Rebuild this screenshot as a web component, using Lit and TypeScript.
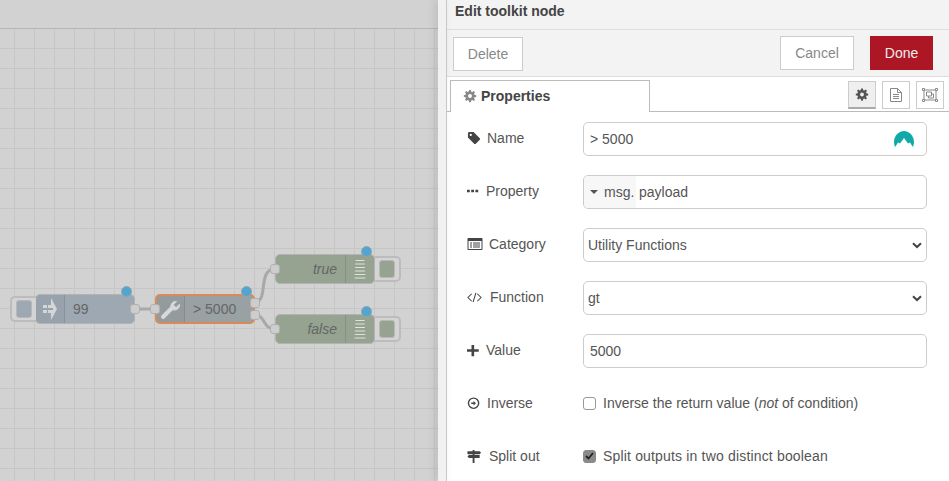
import { html, css, LitElement, svg } from "lit"
import { customElement } from "lit/decorators.js"

type FlowNode = {
  x: number
  y: number
  w: number
  label: string
  kind: "inject" | "tool" | "debug"
}

const NODES: FlowNode[] = [
  { x: 35, y: 294, w: 100, label: "99", kind: "inject" },
  { x: 155, y: 294, w: 100, label: "> 5000", kind: "tool" },
  { x: 275, y: 254, w: 100, label: "true", kind: "debug" },
  { x: 275, y: 314, w: 100, label: "false", kind: "debug" },
]

const arrowIcon = html`<svg width="14" height="24" viewBox="0 0 14 24" fill="#d4d6d8">
  <path d="M0 8h4v3H0zM0 13h4v3H0zM5 8h3V1l6 11-6 11v-7H5v-3h5v-2H5z" />
</svg>`
const wrenchIcon = html`<svg width="20" height="20" viewBox="0 0 20 20">
  <path d="M2.200 17.800 11 9" stroke="#d8d8d8" stroke-width="4.200" stroke-linecap="round" />
  <path d="M10 8.500c-.8-3.400 2-6.600 5.600-6l-3 3 .6 2.200 2.200.6 3-3c.6 3.600-2.600 6.400-6 5.600z" fill="#d8d8d8" stroke="#d8d8d8" />
</svg>`
const debugIcon = html`<svg width="12" height="20" viewBox="0 0 12 20" fill="#dfe3da">
  <path d="M1.500 1h9v1h-9zM1.300 4.500h9.400v1H1.300zM1.100 8h9.800v1H1.100zM.9 11.500h10.200v1H.9zM.7 15h10.600v1H.7zM.5 18.400h11v1H.5z" />
</svg>`

const icons = {
  gear: svg`<path d="M7 0h2l.4 2 1.200.5 1.700-1.100 1.400 1.400-1.100 1.700.5 1.200 2 .4v2l-2 .4-.5 1.200 1.100 1.700-1.400 1.400-1.700-1.100-1.200.5L9 14H7l-.4-2-1.200-.5-1.700 1.100-1.400-1.400 1.100-1.700L2.900 8.300.9 7.900V6l2-.4.500-1.200-1.100-1.700 1.400-1.400 1.700 1.100 1.200-.5zM8 4.800a2.200 2.200 0 1 0 0 4.400 2.200 2.200 0 0 0 0-4.400z" fill-rule="evenodd"/>`,
  tag: svg`<path d="M1 2.500C1 1.700 1.700 1 2.500 1H7l6.600 6.600c.5.500.5 1.300 0 1.800l-4.200 4.200c-.5.500-1.300.5-1.800 0L1 7zM4 3a1.200 1.200 0 1 0 0 2.400A1.200 1.200 0 0 0 4 3z" fill-rule="evenodd"/>`,
  dots: svg`<path d="M0 6.500h3.200v3H0zM4.800 6.500H8v3H4.800zM9.600 6.500h3.200v3H9.600z"/>`,
  list: svg`<path d="M1.500 2h13c.6 0 1 .4 1 1v10c0 .6-.4 1-1 1h-13c-.6 0-1-.4-1-1V3c0-.6.4-1 1-1zm0 3v8h13V5zM3 6.500h2v1H3zm3 0h7v1H6zM3 8.500h2v1H3zm3 0h7v1H6zM3 10.500h2v1H3zm3 0h7v1H6z" fill-rule="evenodd"/>`,
  code: svg`<path d="M5 4 1 8l4 4M11 4l4 4-4 4M9.500 3l-3 10" fill="none" stroke="currentColor" stroke-width="1.100"/>`,
  plus: svg`<path d="M.0 6.600h4.800V2h2.800v4.600h4.900v2.800H7.600V14H4.800V9.400H0z"/>`,
  circle: svg`<path d="M7 1.500a6.200 6.200 0 1 1 0 12.400A6.200 6.200 0 0 1 7 1.500zM7 3a4.700 4.700 0 1 0 0 9.400A4.700 4.700 0 0 0 7 3zM7 5.200l2.500 2.500L7 10.200V8.500H4.500V6.900H7z" fill-rule="evenodd"/>`,
  signs: svg`<path d="M6 1h2v1.500h5.500L15 4l-1.500 1.500H8v1h5.500V9.500H8V15H6V9.500H2L.5 8 2 6.500h4v-1H.5v-3H6z"/>`,
}

// labelAt is the label's distance from the icon column's left edge
const ROWS = [
  { icon: icons.tag, label: "Name", size: 15, labelAt: 20 },
  { icon: icons.dots, label: "Property", size: 14, labelAt: 19 },
  { icon: icons.list, label: "Category", size: 16, labelAt: 22 },
  { icon: icons.code, label: "Function", size: 15, labelAt: 23 },
  { icon: icons.plus, label: "Value", size: 15, labelAt: 19 },
  { icon: icons.circle, label: "Inverse", size: 15, labelAt: 20 },
  { icon: icons.signs, label: "Split out", size: 15, labelAt: 22 },
]

@customElement("app-root")
export class AppRoot extends LitElement {
  static styles = css`
    :host {
      display: flex;
      width: 949px;
      height: 481px;
      overflow: hidden;
      font-family: "Liberation Sans", Arial, sans-serif;
      font-size: 14px;
      color: #555;
    }
    .workspace {
      width: 438px;
      flex: none;
      display: flex;
      flex-direction: column;
      background: #d2d2d2;
    }
    .topbar {
      height: 28px;
      border-bottom: 1px solid #b5b5b5;
      background: #d2d2d2;
      flex: none;
    }
    .canvas {
      position: relative;
      flex: 1;
      background-color: #d2d2d2;
      background-image:
        linear-gradient(#c6c6c6 1px, transparent 1px),
        linear-gradient(90deg, #c6c6c6 1px, transparent 1px);
      background-size: 20px 20px;
      background-position: 14px 19px;
    }
    .wires {
      position: absolute;
      left: 0;
      top: 0;
    }
    .node {
      position: absolute;
      height: 30px;
      box-sizing: border-box;
      border: 1px solid #b3b3b3;
      border-radius: 5px;
      display: flex;
      align-items: center;
      color: #666;
    }
    .node.inject {
      background: #9da8b3;
    }
    .node.tool {
      background: #99a1a3;
      border: 2px solid #da8a58;
    }
    .node.debug {
      background: #95a390;
      flex-direction: row-reverse;
    }
    .node-icon {
      width: 29px;
      height: 100%;
      box-sizing: border-box;
      flex: none;
      display: flex;
      align-items: center;
      justify-content: center;
      background: rgba(0, 0, 0, 0.03);
      border-right: 1px solid rgba(0, 0, 0, 0.1);
      border-radius: 4px 0 0 4px;
    }
    .node.tool .node-icon {
      width: 28px;
    }
    .node.debug .node-icon {
      border-right: 0;
      border-left: 1px solid rgba(0, 0, 0, 0.1);
      border-radius: 0 4px 4px 0;
      background: none;
    }
    .node-label {
      flex: 1;
      padding-left: 8px;
      white-space: nowrap;
    }
    .node.debug .node-label {
      padding: 0 8px 0 0;
      text-align: right;
      font-style: italic;
    }
    .port {
      position: absolute;
      width: 10px;
      height: 10px;
      box-sizing: border-box;
      background: #cdcdcd;
      border: 1px solid #b0b0b0;
      border-radius: 3px;
    }
    .dot {
      position: absolute;
      width: 11px;
      height: 11px;
      top: -9px;
      right: 2px;
      box-sizing: border-box;
      border-radius: 50%;
      background: #52a5ce;
      border: 1px solid #8ba6b5;
    }
    .tool .dot {
      top: -10px;
      right: 1px;
    }
    .nub {
      position: absolute;
      width: 26px;
      height: 26px;
      top: 1px;
      box-sizing: border-box;
      border: 2px solid #bcbcbc;
      background: #d4d4d4;
      display: flex;
      align-items: center;
      justify-content: center;
    }
    .nub span {
      width: 16px;
      height: 18px;
      box-sizing: border-box;
      border-radius: 3px;
      border: 1px solid #b8b8b8;
    }
    .inject .nub {
      left: -26px;
      border-right: 0;
      border-radius: 5px 0 0 5px;
    }
    .inject .nub span {
      background: #9da8b3;
    }
    .debug .nub {
      right: -27px;
      border-left: 0;
      border-radius: 0 5px 5px 0;
    }
    .debug .nub span {
      background: #95a390;
    }
    .gutter {
      width: 9px;
      flex: none;
      position: relative;
      background: #f1f1f1;
      border-right: 1px solid #c8c8c8;
      box-sizing: border-box;
      box-shadow: -3px 0 8px rgba(0, 0, 0, 0.1);
    }
    .panel {
      flex: 1;
      min-width: 0;
      background: #fff;
      display: flex;
      flex-direction: column;
    }
    .title {
      height: 30px;
      flex: none;
      box-sizing: border-box;
      background: #f3f3f3;
      border-bottom: 1px solid #ddd;
      padding: 3px 0 0 8px;
      font-size: 14px;
      line-height: 16px;
      font-weight: bold;
      color: #444;
    }
    .actions {
      height: 47px;
      flex: none;
      box-sizing: border-box;
      background: #f3f3f3;
      border-bottom: 1px solid #ddd;
      padding: 7px 16px 0 6px;
      display: flex;
      justify-content: space-between;
    }
    .actions-right {
      display: flex;
      gap: 16px;
      margin-top: -1px;
    }
    .btn {
      height: 34px;
      box-sizing: border-box;
      background: #fff;
      border: 1px solid #ccc;
      color: #888;
      display: flex;
      align-items: center;
      justify-content: center;
    }
    .delete {
      width: 70px;
    }
    .cancel {
      width: 74px;
    }
    .done {
      width: 63px;
      background: #ad1625;
      border-color: #ad1625;
      color: #eee;
    }
    .tabs {
      height: 32px;
      margin-top: 3px;
      flex: none;
      box-sizing: border-box;
      border-bottom: 1px solid #bbb;
      padding: 0 5px 0 3px;
      display: flex;
      justify-content: space-between;
    }
    .tab {
      width: 200px;
      height: 32px;
      box-sizing: border-box;
      border: 1px solid #bbb;
      border-bottom: 0;
      background: #fff;
      display: flex;
      align-items: center;
      gap: 4px;
      padding: 0 0 2px 12px;
      font-weight: bold;
      color: #444;
    }
    .tab svg {
      fill: #888;
    }
    .tab-buttons {
      display: flex;
      gap: 6px;
      padding-top: 1px;
    }
    .tab-btn {
      width: 28px;
      height: 28px;
      box-sizing: border-box;
      border: 1px solid #ccc;
      background: #fff;
      display: flex;
      align-items: center;
      justify-content: center;
    }
    .tab-btn.active {
      background: #efefef;
      border-bottom: 2px solid #aaa;
    }
    .form {
      display: flex;
      flex-direction: column;
      padding: 10px 22px 0 20px;
    }
    .row {
      height: 34px;
      margin-bottom: 19px;
      display: flex;
      align-items: center;
    }
    .row-label {
      width: 116px;
      flex: none;
      display: flex;
      align-items: center;
      color: #555;
      margin-top: -2px;
    }
    .row-label svg {
      fill: #444;
      color: #444;
      flex: none;
    }
    .field {
      flex: 1;
      height: 34px;
      box-sizing: border-box;
      border: 1px solid #ccc;
      border-radius: 5px;
      display: flex;
      align-items: center;
      justify-content: space-between;
      padding: 0 12px 0 6px;
      color: #555;
    }
    .field.choice {
      padding: 0 4px 0 4px;
    }
    .typed {
      padding-left: 0;
      justify-content: flex-start;
    }
    .type-btn {
      height: 100%;
      width: 52px;
      box-sizing: border-box;
      background: #f7f7f7;
      border-radius: 5px 0 0 5px;
      display: flex;
      align-items: center;
      padding-left: 6px;
      gap: 6px;
      flex: none;
      white-space: nowrap;
    }
    .caret {
      width: 0;
      height: 0;
      border-left: 4px solid transparent;
      border-right: 4px solid transparent;
      border-top: 4px solid #555;
      flex: none;
    }
    .payload {
      margin-left: 3px;
    }
    .check {
      flex: 1;
      display: flex;
      align-items: center;
      gap: 7px;
      color: #555;
      margin-top: -2px;
    }
    .box {
      width: 13px;
      height: 13px;
      box-sizing: border-box;
      border: 1px solid #999;
      border-radius: 3px;
      display: flex;
      align-items: center;
      justify-content: center;
      flex: none;
    }
    .box.on {
      background: #8a8a8a;
      border-color: #8a8a8a;
    }
    .wide {
      letter-spacing: 0.17px;
    }
  `

  private renderNode(n: FlowNode) {
    const iconEl = n.kind === "inject" ? arrowIcon : n.kind === "tool" ? wrenchIcon : debugIcon
    return html`
      <div class="node ${n.kind}" style="left:${n.x}px;top:${n.y - 29}px;width:${n.w}px">
        ${n.kind === "tool" ? "" : html`<div class="nub"><span></span></div>`}
        <div class="node-icon">${iconEl}</div>
        <div class="node-label">${n.label}</div>
        ${n.kind === "inject" ? html`<div class="port" style="right:-6px;top:9px"></div>` : ""}
        ${n.kind === "debug" ? html`<div class="port" style="left:-6px;top:9px"></div>` : ""}
        ${n.kind === "tool"
          ? html`
              <div class="port" style="left:-7px;top:8px"></div>
              <div class="port" style="right:-7px;top:2px"></div>
              <div class="port" style="right:-7px;top:14px"></div>
            `
          : ""}
        <div class="dot"></div>
      </div>
    `
  }

  private renderField(i: number) {
    const chevron = html`<svg width="10" height="7" viewBox="0 0 10 7" fill="none" stroke="#444" stroke-width="2">
      <path d="M1 1.200 5 5l4-3.800" />
    </svg>`
    switch (i) {
      case 0:
        return html`<div class="field">
          <span>&gt; 5000</span>
          <svg width="20" height="16" viewBox="0 0 20 16" fill="#12a9a9">
            <path d="M0 11C0 5 4.500 0 10 0s10 5 10 11c0 2-.5 3.500-1.200 5L16 11.500l-2 1L10 7l-4 5.500-2-1L1.200 16C.5 14.500 0 13 0 11z" />
          </svg>
        </div>`
      case 1:
        return html`<div class="field typed">
          <div class="type-btn"><span class="caret"></span>msg.</div>
          <span class="payload">payload</span>
        </div>`
      case 2:
        return html`<div class="field choice"><span>Utility Functions</span>${chevron}</div>`
      case 3:
        return html`<div class="field choice"><span>gt</span>${chevron}</div>`
      case 4:
        return html`<div class="field"><span>5000</span></div>`
      case 5:
        return html`<div class="check">
          <span class="box"></span>
          <span>Inverse the return value (<i>not</i> of condition)</span>
        </div>`
      default:
        return html`<div class="check">
          <span class="box on">
            <svg width="9" height="8" viewBox="0 0 9 8" fill="none" stroke="#222" stroke-width="1.800">
              <path d="M1 4l2.500 2.500L8 1" />
            </svg>
          </span>
          <span class="wide">Split outputs in two distinct boolean</span>
        </div>`
    }
  }

  render() {
    return html`
      <div class="workspace">
        <div class="topbar"></div>
        <div class="canvas">
          <svg class="wires" width="438" height="452" fill="none" stroke="#a8a8a8" stroke-width="3">
            <path d="M135 280h20" />
            <path d="M255 273c14 0 2-33 20-33" />
            <path d="M255 286c11 0 7 14 20 14" />
          </svg>
          ${NODES.map((n) => this.renderNode(n))}
        </div>
      </div>
      <div class="gutter"></div>
      <div class="panel">
        <div class="title">Edit toolkit node</div>
        <div class="actions">
          <div class="btn delete">Delete</div>
          <div class="actions-right">
            <div class="btn cancel">Cancel</div>
            <div class="btn done">Done</div>
          </div>
        </div>
        <div class="tabs">
          <div class="tab">
            <svg width="14" height="14" viewBox="0 0 16 14">${icons.gear}</svg>
            Properties
          </div>
          <div class="tab-buttons">
            <div class="tab-btn active">
              <svg width="14" height="13" viewBox="0 0 16 14" fill="#555">${icons.gear}</svg>
            </div>
            <div class="tab-btn">
              <svg width="12" height="14" viewBox="0 0 12 14" fill="none" stroke="#888">
                <path d="M.5.500h7l4 4v9H.5zM7.500.5v4h4M3 6.500h6M3 8.500h6M3 10.500h6" />
              </svg>
            </div>
            <div class="tab-btn">
              <svg width="16" height="14" viewBox="0 0 16 14" fill="none" stroke="#888">
                <path d="M2 2h12v10H2zM4.500 4h5v4h-5zM6.500 8v2h5V6h-2" />
                <path d="M.5.5h2v2h-2zM13.500.5h2v2h-2zM.5 11.500h2v2h-2zM13.500 11.500h2v2h-2z" fill="#fff" />
              </svg>
            </div>
          </div>
        </div>
        <div class="form">
          ${ROWS.map(
            (r, i) => html`
              <div class="row">
                <div class="row-label">
                  <svg width=${r.size} height=${r.size} viewBox="0 0 16 16" style="margin-right:${r.labelAt - r.size}px">${r.icon}</svg>
                  ${r.label}
                </div>
                ${this.renderField(i)}
              </div>
            `,
          )}
        </div>
      </div>
    `
  }
}
